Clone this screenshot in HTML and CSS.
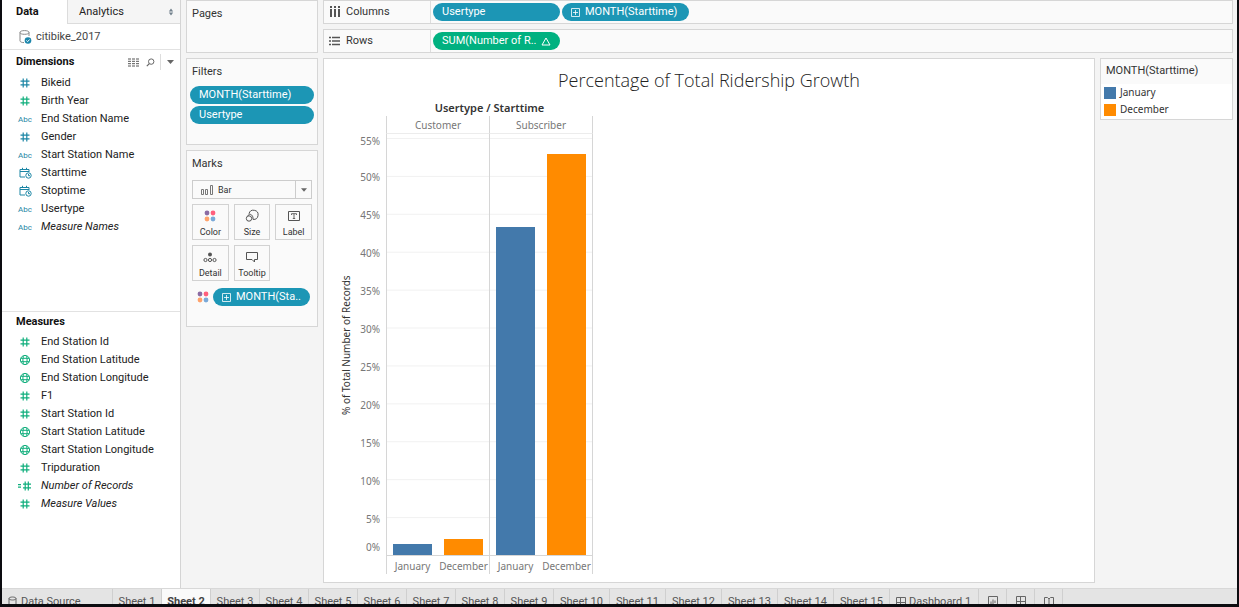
FILE: index.html
```html
<!DOCTYPE html>
<html lang="en">
<head>
<meta charset="utf-8">
<title>citibike_2017 - Sheet 2</title>
<link rel="stylesheet" href="styles.css">
</head>
<body>
<svg class="defs" aria-hidden="true">
  <symbol id="hash" viewBox="0 0 14 12"><path d="M5.2 1.5v9M8.8 1.5v9M2.5 4.2h9M2.5 7.8h9" fill="none" stroke="currentColor" stroke-width="1.2"/></symbol>
  <symbol id="calc" viewBox="0 0 14 12"><path d="M7.2 1.5v9M10.3 1.5v9M5 4.2h8M5 7.8h8M0 4.7h3M0 7.2h3" fill="none" stroke="currentColor" stroke-width="1.2"/></symbol>
  <symbol id="globe" viewBox="0 0 14 12"><g fill="none" stroke="currentColor"><circle cx="7" cy="6" r="4.6"/><ellipse cx="7" cy="6" rx="2.1" ry="4.6"/><path d="M2.8 4.3h8.4M2.8 7.7h8.4"/></g></symbol>
  <symbol id="date" viewBox="0 0 14 12"><g fill="none" stroke="currentColor"><path d="M7 10H2V2.5h9V5M2 4.5h9M4.5 .8v2M8.5 .8v2"/><circle cx="10.5" cy="8.5" r="2.7"/><path d="M10.5 7v1.700h1.5"/></g></symbol>
  <symbol id="plus" viewBox="0 0 9 9"><path d="M.5.5h8v8h-8zM4.5 2v5M2 4.5h5" fill="none" stroke="currentColor" stroke-width=".8"/></symbol>
  <symbol id="dots" viewBox="0 0 12 12"><circle cx="3" cy="3" r="2.4" fill="#8b6ba3"/><circle cx="9" cy="3" r="2.4" fill="#ff5f7c"/><circle cx="3" cy="9" r="2.4" fill="#ffa26b"/><circle cx="9" cy="9" r="2.4" fill="#7aa9d8"/></symbol>
</svg>
<div class="app">
  <div class="workspace">
    <aside class="data-pane">
      <div class="pane-tabs">
        <button class="pane-tab active">Data</button>
        <button class="pane-tab analytics">Analytics
          <svg width="6" height="8" viewBox="0 0 6 8"><path d="M3 .5 5.2 3.5H.8zM3 7.5.8 4.500h4.400z" fill="#71808c"/></svg>
        </button>
      </div>
      <div class="source">
        <svg width="13" height="14" viewBox="0 0 13 14"><path d="M10 6V2.5C10 1.2 8 .6 5.5.6S1 1.2 1 2.5v8.3C1 12 3 12.6 5 12.6M1 2.5c0 1.2 2 1.8 4.5 1.8S10 3.7 10 2.5" fill="none" stroke="#888"/><circle cx="9" cy="10.5" r="3.3" fill="#1c86ab"/><path d="m7.4 10.5 1.2 1.2 2-2.2" fill="none" stroke="#fff"/></svg>
        <span>citibike_2017</span>
      </div>
      <section class="fields dimensions">
        <header class="fields-head">
          <h2>Dimensions</h2>
          <svg width="12" height="9" viewBox="0 0 12 9"><path d="M0 1h12M0 3.300h12M0 5.700h12M0 8h12" stroke="#555" stroke-dasharray="3 1"/></svg>
          <svg class="find" width="9" height="9" viewBox="0 0 9 9"><circle cx="5.2" cy="3.6" r="2.7" fill="none" stroke="#666"/><path d="M3.3 5.6.8 8.2" stroke="#666" stroke-width="1.2"/></svg>
          <svg class="more" width="7" height="4" viewBox="0 0 7 4"><path d="M0 0h7L3.5 4z" fill="#666"/></svg>
        </header>
        <ul class="field-list">
          <li class="dim"><svg class="type"><use href="#hash"/></svg>Bikeid</li>
          <li class="mea"><svg class="type"><use href="#hash"/></svg>Birth Year</li>
          <li class="dim"><span class="type">Abc</span>End Station Name</li>
          <li class="dim"><svg class="type"><use href="#hash"/></svg>Gender</li>
          <li class="dim"><span class="type">Abc</span>Start Station Name</li>
          <li class="dim"><svg class="type"><use href="#date"/></svg>Starttime</li>
          <li class="dim"><svg class="type"><use href="#date"/></svg>Stoptime</li>
          <li class="dim"><span class="type">Abc</span>Usertype</li>
          <li class="dim"><span class="type">Abc</span><em>Measure Names</em></li>
        </ul>
      </section>
      <section class="fields measures">
        <header class="fields-head"><h2>Measures</h2></header>
        <ul class="field-list">
          <li class="mea"><svg class="type"><use href="#hash"/></svg>End Station Id</li>
          <li class="mea"><svg class="type"><use href="#globe"/></svg>End Station Latitude</li>
          <li class="mea"><svg class="type"><use href="#globe"/></svg>End Station Longitude</li>
          <li class="mea"><svg class="type"><use href="#hash"/></svg>F1</li>
          <li class="mea"><svg class="type"><use href="#hash"/></svg>Start Station Id</li>
          <li class="mea"><svg class="type"><use href="#globe"/></svg>Start Station Latitude</li>
          <li class="mea"><svg class="type"><use href="#globe"/></svg>Start Station Longitude</li>
          <li class="mea"><svg class="type"><use href="#hash"/></svg>Tripduration</li>
          <li class="mea"><svg class="type"><use href="#calc"/></svg><em>Number of Records</em></li>
          <li class="mea"><svg class="type"><use href="#hash"/></svg><em>Measure Values</em></li>
        </ul>
      </section>
    </aside>

    <div class="cards">
      <section class="card pages"><h3>Pages</h3></section>
      <section class="card filters">
        <h3>Filters</h3>
        <div class="filter-pills">
          <button class="pill">MONTH(Starttime)</button>
          <button class="pill">Usertype</button>
        </div>
      </section>
      <section class="card marks">
        <h3>Marks</h3>
        <div class="mark-type">
          <svg width="14" height="12" viewBox="0 0 14 12"><path d="M1.5 5.5h2v5h-2zM5.5 5.5h2v5h-2zM10.5 1.5h2v9h-2z" fill="none" stroke="#777"/></svg>
          <select aria-label="Mark type"><option>Bar</option></select>
          <span class="drop"><svg width="6" height="4" viewBox="0 0 7 4"><path d="M0 0h7L3.5 4z" fill="#666"/></svg></span>
        </div>
        <div class="mark-buttons">
          <button><svg width="14" height="14" viewBox="-1 -1 14 14"><use href="#dots" width="12" height="12"/></svg>Color</button>
          <button><svg width="14" height="14" viewBox="0 0 14 14"><g fill="none" stroke="#555"><circle cx="4" cy="9.5" r="2.7"/><path d="M4 4.800A4.600 4.600 0 1 1 8 10.400"/><path d="M3 6.900C3.500 4 8.500 5 8 10.400"/></g></svg>Size</button>
          <button><svg width="14" height="14" viewBox="0 0 14 14"><path d="M1.5 2.5h11v9h-11z" fill="none" stroke="#555"/><path d="M4.5 6V4.700h5V6M7 4.700v4.800M5.800 9.500h2.400" fill="none" stroke="#666"/></svg>Label</button>
          <button><svg width="14" height="14" viewBox="0 0 14 14"><circle cx="7" cy="4.5" r="2" fill="#555"/><g fill="none" stroke="#555"><circle cx="2.5" cy="10" r="1.6"/><circle cx="7" cy="10" r="1.6"/><circle cx="11.5" cy="10" r="1.6"/></g></svg>Detail</button>
          <button><svg width="14" height="14" viewBox="0 0 14 14"><path d="M1.5 2.500h11v7H9.500v2.500L7 9.500H1.500z" fill="none" stroke="#555"/></svg>Tooltip</button>
        </div>
        <div class="mark-pill">
          <svg width="12" height="12"><use href="#dots"/></svg>
          <button class="pill"><svg width="9" height="9"><use href="#plus"/></svg>MONTH(Sta..</button>
        </div>
      </section>
    </div>

    <main class="main">
      <div class="shelf">
        <div class="shelf-name"><svg width="12" height="12" viewBox="0 0 12 12"><path d="M2 0v2M6 0v2M10 0v2M2 3v8M6 3v8M10 3v8" stroke="#555" stroke-width="2"/></svg>Columns</div>
        <button class="pill">Usertype</button>
        <button class="pill"><svg width="9" height="9"><use href="#plus"/></svg>MONTH(Starttime)</button>
      </div>
      <div class="shelf">
        <div class="shelf-name"><svg width="12" height="12" viewBox="0 0 12 12"><path d="M0 2.500h2M3 2.500h8M0 6h2M3 6h8M0 9.500h2M3 9.500h8" stroke="#555" stroke-width="1.5"/></svg>Rows</div>
        <button class="pill green">SUM(Number of R..<svg class="delta" width="10" height="9" viewBox="0 0 10 9"><path d="M5 1 9 8H1z" fill="none" stroke="#fff"/></svg></button>
      </div>
      <div class="stage">
        <section class="view">
          <h1>Percentage of Total Ridership Growth</h1>
          <div class="chart">
            <div class="chart-title">Usertype / Starttime</div>
            <div class="pane-head first">Customer</div>
            <div class="pane-head second">Subscriber</div>
            <div class="axis-title">% of Total Number of Records</div>
            <div class="axis">
              <span>55%</span><span>50%</span><span>45%</span><span>40%</span><span>35%</span><span>30%</span><span>25%</span><span>20%</span><span>15%</span><span>10%</span><span>5%</span><span>0%</span>
            </div>
            <div class="plot first">
              <div class="bars"><i class="bar jan" style="height:2.6%"></i><i class="bar dec" style="height:3.8%"></i></div>
            </div>
            <div class="plot second">
              <div class="bars"><i class="bar jan" style="height:78.7%"></i><i class="bar dec" style="height:96.2%"></i></div>
            </div>
            <div class="pane-foot first"><span>January</span><span>December</span></div>
            <div class="pane-foot second"><span>January</span><span>December</span></div>
          </div>
        </section>
        <aside class="legend">
          <h3>MONTH(Starttime)</h3>
          <ul>
            <li><i class="swatch jan"></i>January</li>
            <li><i class="swatch dec"></i>December</li>
          </ul>
        </aside>
      </div>
    </main>
  </div>

  <nav class="sheets">
    <button class="tab source-tab"><svg width="9" height="11" viewBox="0 0 9 11"><path d="M1 2.500v6.500c0 2 7 2 7 0V2.500M1 2.500c0-2 7-2 7 0s-7 2-7 0" fill="none" stroke="#666"/></svg>Data Source</button>
    <button class="tab">Sheet 1</button>
    <button class="tab active">Sheet 2</button>
    <button class="tab">Sheet 3</button>
    <button class="tab">Sheet 4</button>
    <button class="tab">Sheet 5</button>
    <button class="tab">Sheet 6</button>
    <button class="tab">Sheet 7</button>
    <button class="tab">Sheet 8</button>
    <button class="tab">Sheet 9</button>
    <button class="tab wide">Sheet 10</button>
    <button class="tab wide">Sheet 11</button>
    <button class="tab wide">Sheet 12</button>
    <button class="tab wide">Sheet 13</button>
    <button class="tab wide">Sheet 14</button>
    <button class="tab wide">Sheet 15</button>
    <button class="tab dash"><svg width="10" height="10" viewBox="0 0 10 10"><path d="M.5.5h9v9h-9zM4.5.5v9M.5 5.5h9" fill="none" stroke="#666"/></svg>Dashboard 1</button>
    <button class="tab new" aria-label="New worksheet"><svg width="12" height="11" viewBox="0 0 12 11"><path d="M8 9.500H1.500v-9h9V7M4 8V5.500M6 8V3.500M8 7V4.500M10.500 7v4M8.500 9h4" fill="none" stroke="#666"/></svg></button>
    <button class="tab new" aria-label="New dashboard"><svg width="12" height="11" viewBox="0 0 12 11"><path d="M8 9.500H1.500v-9h9V7M5.500.5v9M1.500 5.500h9M10.500 7v4M8.500 9h4" fill="none" stroke="#666"/></svg></button>
    <button class="tab new" aria-label="New story"><svg width="12" height="11" viewBox="0 0 12 11"><path d="M1.500 10V1.500h3L6 3l1.500-1.500h3V7M6 3v7M1.500 9.500H5M10.500 7v4M8.500 9h4" fill="none" stroke="#666"/></svg></button>
  </nav>
</div>
</body>
</html>
```
FILE: styles.css
```css
* { box-sizing: border-box; }

body {
  margin: 0;
  font: 11px/18px Roboto, "Liberation Sans", sans-serif;
  color: #333;
}

h1, h2, h3, ul { margin: 0; padding: 0; font: inherit; list-style: none; }

button, select {
  margin: 0;
  padding: 0;
  border: 0;
  background: none;
  color: inherit;
  font: inherit;
}

svg { display: block; flex: none; }
.defs { position: absolute; width: 0; height: 0; }

.app {
  display: flex;
  flex-direction: column;
  height: 100vh;
  overflow: hidden;
  border: solid #0c0c10;
  border-width: 0 2px 3px;
  background: #f4f4f4;
}

.workspace { display: flex; flex: 1; min-height: 0; }

/* Data pane */
.data-pane {
  display: flex;
  flex-direction: column;
  width: 179px;
  border-right: 1px solid #d4d4d4;
  background: #fff;
  color: #222;
}

.pane-tabs { display: flex; height: 24px; }

.pane-tab { width: 65px; padding-left: 14px; text-align: left; }
.pane-tab.active { font-weight: 700; color: #111; }

.pane-tab.analytics {
  display: flex;
  flex: 1;
  align-items: center;
  justify-content: space-between;
  padding: 0 6px 0 11px;
  border: solid #dcdcdc;
  border-width: 0 0 1px 1px;
  background: #f5f5f5;
}

.source {
  display: flex;
  align-items: center;
  gap: 4px;
  height: 26px;
  padding-left: 17px;
  border-bottom: 1px solid #e2e2e2;
  color: #444;
}

.dimensions { flex: 0 1 261px; }
.measures { border-top: 1px solid #e2e2e2; }

.fields-head { display: flex; align-items: center; height: 24px; padding: 0 6px 0 14px; }
.fields-head h2 { flex: 1; font-weight: 700; color: #111; }
.measures .fields-head { height: 20px; }
.find { margin: 0 5px 0 6px; }
.more { box-sizing: content-box; padding: 6px 0 6px 6px; border-left: 1px solid #ddd; }

.field-list li { display: flex; align-items: center; height: 18px; padding-left: 16px; }
.measures .field-list { padding-top: 1px; }
.type { width: 14px; height: 12px; margin-right: 9px; font-size: 8px; line-height: 13px; }
.dim .type { color: #1c86a5; }
.mea .type { color: #0fae7c; }

/* Cards */
.cards { display: flex; flex-direction: column; gap: 5px; width: 142px; padding: 0 5px; }
.card { border: 1px solid #d6d6d6; background: #fafafa; }
.card h3 { padding: 4px 5px; }
.pages { height: 53px; }
.filters { height: 87px; }
.marks { padding-bottom: 20px; }

.filter-pills { display: grid; gap: 2px; padding: 1px 3px; }

.pill {
  display: flex;
  align-items: center;
  gap: 5px;
  height: 18px;
  padding: 0 9px;
  border-radius: 9px;
  background: #1c96b5;
  color: #fff;
  white-space: nowrap;
}
.pill.green { background: #00b180; }

.mark-type {
  display: flex;
  align-items: center;
  height: 19px;
  margin: 3px 5px 5px;
  padding-left: 7px;
  border: 1px solid #ccc;
  font-size: 9px;
}
.mark-type select { flex: 1; min-width: 0; padding-left: 4px; appearance: none; }
.drop { display: grid; place-items: center; align-self: stretch; width: 16px; border-left: 1px solid #ccc; }

.mark-buttons { display: grid; grid-template-columns: repeat(3, 1fr); gap: 5px; padding: 0 5px; }
.mark-buttons button {
  display: flex;
  flex-direction: column;
  align-items: center;
  gap: 3px;
  height: 36px;
  padding-top: 4px;
  border: 1px solid #d2d2d2;
  font-size: 9px;
  line-height: 12px;
}

.mark-pill { display: flex; align-items: center; gap: 4px; padding: 7px 8px 0 10px; }
.mark-pill .pill { flex: 1; }

/* Shelves */
.main { display: flex; flex: 1; flex-direction: column; gap: 5px; min-width: 0; padding-right: 4px; }
.shelf {
  display: flex;
  align-items: center;
  gap: 2px;
  height: 24px;
  border: 1px solid #d6d6d6;
  background: #fafafa;
}
.shelf-name {
  display: flex;
  align-items: center;
  gap: 5px;
  align-self: stretch;
  width: 107px;
  padding-left: 5px;
  border-right: 1px solid #ddd;
}
.shelf .pill { width: 127px; }
.delta { margin-left: auto; }

.stage { display: flex; flex: 1; gap: 5px; min-height: 0; padding-bottom: 5px; }

/* View */
.view {
  display: flex;
  flex: 1;
  flex-direction: column;
  border: 1px solid #d6d6d6;
  background: #fff;
  padding: 6px 0 8px;
}
.view h1 {
  padding-bottom: 6px;
  font: 300 18px/30px "Open Sans", "Noto Sans", sans-serif;
  color: #222;
  text-align: center;
}

.chart {
  display: grid;
  flex: 1;
  grid-template-columns: 16px 32px 104px 103px;
  grid-template-rows: 15px 18px 1fr 18px;
  padding-left: 14px;
  font: 10px/14px "Noto Sans", "Open Sans", sans-serif;
  color: #777;
}
.chart-title { grid-column: 3 / 5; font-size: 11px; font-weight: 600; color: #333; text-align: center; }
.first { grid-column: 3; border-left: 1px solid #d6d6d6; }
.second { grid-column: 4; }
.pane-head { grid-row: 2; border-right: 1px solid #d6d6d6; border-bottom: 1px solid #ececec; line-height: 18px; text-align: center; }
.axis-title {
  grid-row: 3;
  grid-column: 1;
  writing-mode: vertical-rl;
  transform: rotate(180deg);
  line-height: 16px;
  color: #333;
  text-align: center;
  white-space: nowrap;
}
.axis {
  display: grid;
  grid-row: 3;
  grid-column: 2;
  grid-template-rows: 24px repeat(10, 1fr) 18px;
  align-items: center;
  padding-right: 6px;
  text-align: right;
}
.axis span:first-child { align-self: start; }

.plot { display: grid; grid-row: 3; padding-top: 4px; border-right: 1px solid #d6d6d6; border-bottom: 1px solid #d6d6d6; }
.bars {
  display: grid;
  grid-template-columns: 1fr 1fr;
  grid-template-rows: 100%;
  place-items: end center;
  background: linear-gradient(#f1f1f1 1px, transparent 1px) 0 0 / 100% calc(100% / 11);
}
.bar { width: 39px; }
.jan { background: #4379ab; }
.dec { background: #ff8b00; }

.pane-foot { display: grid; grid-row: 4; grid-template-columns: 1fr 1fr; border-right: 1px solid #d6d6d6; line-height: 20px; text-align: center; }

/* Legend */
.legend { align-self: flex-start; width: 133px; border: 1px solid #d6d6d6; background: #fff; }
.legend h3 { padding: 3px 5px 4px; background: #fafafa; }
.legend ul { padding-bottom: 1px; font-family: "Noto Sans", sans-serif; font-size: 10px; line-height: 17px; }
.legend li { display: flex; align-items: center; gap: 4px; padding-left: 3px; }
.swatch { width: 12px; height: 12px; }

/* Sheet tabs */
.sheets { display: flex; flex: none; height: 16px; overflow: hidden; border-top: 1px solid #d8d8d8; background: #e4e4e4; color: #555; }
.tab { flex: none; width: 49px; height: 25px; border-right: 1px solid #cfcfcf; white-space: nowrap; }
.tab.wide { width: 56px; }
.tab.active { background: #fafafa; font-weight: 700; color: #444; }
.source-tab, .dash, .new { display: flex; align-items: center; gap: 4px; }
.tab.source-tab { width: 111px; padding-left: 6px; }
.tab.dash { width: 89px; padding-left: 6px; gap: 3px; }
.tab.new { width: 28px; justify-content: center; }
```
